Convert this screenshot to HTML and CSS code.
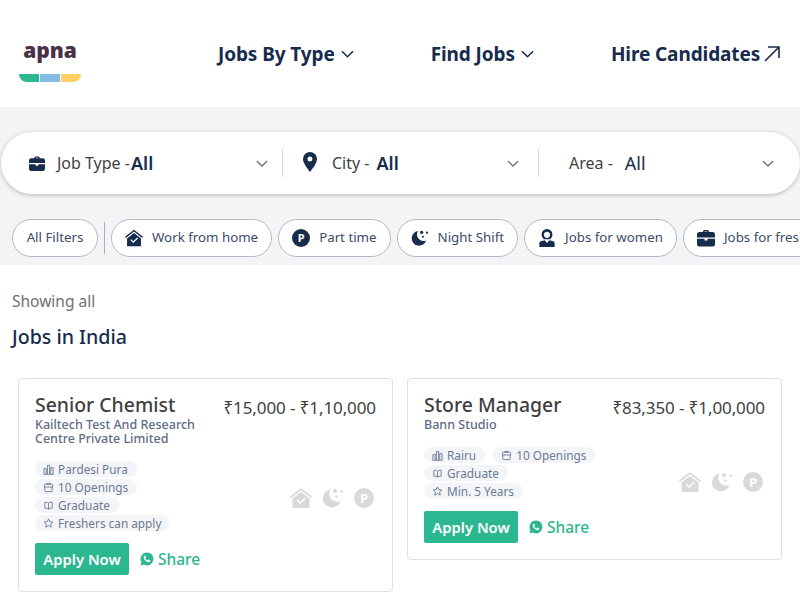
FILE: index.html
```html
<!DOCTYPE html>
<html lang="en">
<head>
  <meta charset="UTF-8" />
  <title>Jobs in India</title>
  <link rel="stylesheet" href="styles.css">
</head>
<body>

<svg class="defs" width="0" height="0" aria-hidden="true">
  <symbol id="i-house" viewBox="0 0 22 20">
    <path d="M11 0 22 8.600l-1 1.300L11 2.200 1 9.900 0 8.600z" fill="currentColor"/>
    <path fill-rule="evenodd" d="M11 4 19.500 10.500V20H2.500V10.500zM7.500 11.500 6.500 12.500 10 16 16 10.500 15 9.500 10 14z" fill="currentColor"/>
  </symbol>
  <symbol id="i-moon" viewBox="0 0 22 20">
    <path d="M8.500 1.500A9 9 0 1 0 18.500 13 8 8 0 0 1 8.500 1.500z" fill="currentColor"/>
    <circle cx="13" cy="3" r="2" fill="currentColor"/>
    <circle cx="19.500" cy="3.500" r="1.300" fill="currentColor"/>
    <circle cx="14.500" cy="8.500" r="1.300" fill="currentColor"/>
  </symbol>
  <symbol id="i-case" viewBox="0 0 18 18">
    <path fill-rule="evenodd" d="M6 3V2.500A1.500 1.500 0 0 1 7.500 1h3A1.500 1.500 0 0 1 12 2.500V3h3.500A2.500 2.500 0 0 1 18 5.500V8.500H0V5.500A2.500 2.500 0 0 1 2.500 3zM7.500 2.500V3h3V2.500z" fill="currentColor"/>
    <path d="M0 9.800H7.500V11.500H10.500V9.800H18V15A2.500 2.500 0 0 1 15.500 17.500H2.500A2.500 2.500 0 0 1 0 15z" fill="currentColor"/>
  </symbol>
  <symbol id="i-woman" viewBox="0 0 18 20">
    <path fill-rule="evenodd" d="M9 0a6 6 0 0 1 6 6c0 2-.8 3.500-2 4.600V11.500H5V10.600C3.800 9.500 3 8 3 6a6 6 0 0 1 6-6zM9 3C7.300 3 5.600 4.300 5.500 6.500 5.500 8.500 7 10 9 10s3.500-1.500 3.500-3.500C12.400 4.300 10.700 3 9 3z" fill="currentColor"/>
    <path d="M2 13.500 6.500 12.500 9 15.500 11.500 12.500 16 13.500A2 2 0 0 1 17.500 15.500V20H.5V15.500A2 2 0 0 1 2 13.500z" fill="currentColor"/>
  </symbol>
  <symbol id="i-chev" viewBox="0 0 14 8">
    <path d="M1 1 7 7 13 1" fill="none" stroke="currentColor" stroke-width="1.600"/>
  </symbol>
  <symbol id="i-wa" viewBox="0 0 16 16">
    <path fill-rule="evenodd" d="M8 .5a7.400 7.400 0 0 1 0 14.800 7.400 7.400 0 0 1-3.500-.9L.6 15.500l1.100-3.800A7.400 7.400 0 0 1 8 .5zM5.700 4.200c-.3 0-.7.100-1 .5-.8 1-.6 2.300.4 3.800 1.200 1.700 2.800 2.900 4.500 3.100 1 .1 2-.6 2.100-1.400.1-.5 0-.7-.2-.8L9.900 8.600c-.3-.1-.5 0-.6.200l-.5.700c-.1.200-.3.200-.5.100-1-.5-1.700-1.200-2.200-2.100-.1-.2 0-.3.100-.5l.4-.5c.1-.1.100-.3.100-.5L6.100 4.500c-.1-.2-.2-.3-.4-.3z" fill="currentColor"/>
  </symbol>
  <symbol id="i-city" viewBox="0 0 12 12">
    <path d="M1 11V5H3.500V11M4.800 11V1.500H7.200V11M8.500 11V4H11V11M.5 11.200H11.500" fill="none" stroke="currentColor"/>
  </symbol>
  <symbol id="i-open" viewBox="0 0 12 12">
    <path d="M1.500 5.500V3.500A1 1 0 0 1 2.500 2.500H9.500A1 1 0 0 1 10.500 3.500V5.500H1.500zM2 5.500V9.500A1 1 0 0 0 3 10.500H9A1 1 0 0 0 10 9.500V5.500M4 2.500V1.500H8V2.500" fill="none" stroke="currentColor"/>
  </symbol>
  <symbol id="i-book" viewBox="0 0 12 12">
    <path d="M6 3.500C5 2.500 3.500 2.300 2 2.500V9C3.500 8.800 5 9 6 10 7 9 8.500 8.800 10 9V2.500C8.500 2.300 7 2.500 6 3.500zM6 3.500V10" fill="none" stroke="currentColor"/>
  </symbol>
  <symbol id="i-star" viewBox="0 0 12 12">
    <path d="M6 1 7.400 4 10.800 4.400 8.300 6.700 9 10 6 8.300 3 10 3.700 6.700 1.200 4.400 4.600 4z" fill="none" stroke="currentColor"/>
  </symbol>
</svg>

<header class="topbar">
  <div class="logo">
    <span class="logo-text">apna</span>
    <div class="logo-bar"><i class="green"></i><i class="blue"></i><i class="yellow"></i></div>
  </div>
  <nav class="nav">
    <a class="nav-item">Jobs By Type <svg class="nav-chev"><use href="#i-chev"/></svg></a>
    <a class="nav-item">Find Jobs <svg class="nav-chev"><use href="#i-chev"/></svg></a>
    <a class="nav-item">Hire Candidates
      <svg class="nav-arrow" viewBox="0 0 16 16"><path d="M1 15 15 1M4 1H15V12" fill="none" stroke="currentColor" stroke-width="1.600"/></svg>
    </a>
  </nav>
</header>

<section class="band">
  <div class="search">
    <div class="seg seg-type">
      <svg class="seg-icon"><use href="#i-case"/></svg>
      <span class="seg-label">Job Type -</span><b class="seg-value">All</b>
      <svg class="seg-chev"><use href="#i-chev"/></svg>
    </div>
    <div class="seg seg-city">
      <svg class="seg-pin" viewBox="0 0 14 20"><path fill-rule="evenodd" d="M7 0a7 7 0 0 1 7 7c0 4-4 9-7 13C4 16 0 11 0 7a7 7 0 0 1 7-7zM7 4.500a2.500 2.500 0 1 0 0 5 2.500 2.500 0 0 0 0-5z" fill="currentColor"/></svg>
      <span class="seg-label">City -</span><b class="seg-value">All</b>
      <svg class="seg-chev"><use href="#i-chev"/></svg>
    </div>
    <div class="seg seg-area">
      <span class="seg-label">Area -</span><span class="seg-value plain">All</span>
      <svg class="seg-chev"><use href="#i-chev"/></svg>
    </div>
  </div>

  <div class="chips">
    <button class="chip chip-plain">All Filters</button>
    <span class="chip-sep"></span>
    <button class="chip"><svg class="chip-icon"><use href="#i-house"/></svg>Work from home</button>
    <button class="chip"><span class="p-icon">P</span>Part time</button>
    <button class="chip"><svg class="chip-icon"><use href="#i-moon"/></svg>Night Shift</button>
    <button class="chip"><svg class="chip-icon"><use href="#i-woman"/></svg>Jobs for women</button>
    <button class="chip"><svg class="chip-icon"><use href="#i-case"/></svg>Jobs for freshers</button>
  </div>
</section>

<main class="results">
  <p class="showing">Showing all</p>
  <h1 class="heading">Jobs in India</h1>

  <div class="cards">
    <article class="card">
      <div class="card-left">
        <h2 class="job-title">Senior Chemist</h2>
        <p class="company">Kailtech Test And Research Centre Private Limited</p>
        <ul class="tags">
          <li class="tag"><svg><use href="#i-city"/></svg>Pardesi Pura</li>
          <li class="tag"><svg><use href="#i-open"/></svg>10 Openings</li>
          <li class="tag"><svg><use href="#i-book"/></svg>Graduate</li>
          <li class="tag"><svg><use href="#i-star"/></svg>Freshers can apply</li>
        </ul>
        <div class="actions">
          <button class="apply">Apply Now</button>
          <a class="share"><svg><use href="#i-wa"/></svg>Share</a>
        </div>
      </div>
      <div class="card-right">
        <div class="salary">₹15,000 - ₹1,10,000</div>
        <div class="perks">
          <svg><use href="#i-house"/></svg>
          <svg><use href="#i-moon"/></svg>
          <span class="p-icon">P</span>
        </div>
      </div>
    </article>

    <article class="card">
      <div class="card-left">
        <h2 class="job-title">Store Manager</h2>
        <p class="company">Bann Studio</p>
        <ul class="tags">
          <li class="tag"><svg><use href="#i-city"/></svg>Rairu</li>
          <li class="tag"><svg><use href="#i-open"/></svg>10 Openings</li>
          <li class="tag"><svg><use href="#i-book"/></svg>Graduate</li>
          <li class="tag"><svg><use href="#i-star"/></svg>Min. 5 Years</li>
        </ul>
        <div class="actions">
          <button class="apply">Apply Now</button>
          <a class="share"><svg><use href="#i-wa"/></svg>Share</a>
        </div>
      </div>
      <div class="card-right">
        <div class="salary">₹83,350 - ₹1,00,000</div>
        <div class="perks">
          <svg><use href="#i-house"/></svg>
          <svg><use href="#i-moon"/></svg>
          <span class="p-icon">P</span>
        </div>
      </div>
    </article>
  </div>
</main>

</body>
</html>
```

FILE: styles.css
```css
* {
  box-sizing: border-box;
}
html, body {
  height: 600px;
  overflow: hidden;
}
body {
  margin: 0;
  background: #fff;
  font-family: "Noto Sans", Arial, sans-serif;
  color: #172b4d;
}
.defs {
  position: absolute;
}

/* header */
.topbar {
  height: 107px;
  display: flex;
  align-items: center;
  padding-left: 19px;
}
.logo {
  width: 62px;
  margin-right: 137px;
  display: flex;
  flex-direction: column;
  align-items: center;
  margin-top: 14px;
}
.logo-text {
  font-size: 21px;
  font-weight: 900;
  line-height: 22px;
  color: #4a3049;
  margin-bottom: 13px;
}
.logo-bar {
  width: 62px;
  height: 8px;
  display: flex;
  gap: 1px;
  border-radius: 0 0 11px 11px;
  overflow: hidden;
}
.logo-bar i {
  flex: 1;
}
.logo-bar .green { background: #2bb792; }
.logo-bar .blue { background: #85bce4; }
.logo-bar .yellow { background: #ffcf5f; }
.nav {
  display: flex;
  gap: 77px;
}
.nav-item {
  display: flex;
  align-items: center;
  gap: 6px;
  font-size: 19px;
  font-weight: 700;
  letter-spacing: -0.1px;
  white-space: nowrap;
}
.nav-chev {
  width: 13px;
  height: 8px;
}
.nav-arrow {
  width: 16px;
  height: 16px;
  margin-left: -2px;
}

/* search + filter band */
.band {
  background: #f3f4f6;
  padding: 25px 0 8px;
}
.search {
  height: 62px;
  margin-left: 1px;
  display: grid;
  grid-template-columns: 282px 256px 1fr;
  background: #fff;
  border-radius: 31px;
  box-shadow: 0 1px 4px rgba(0, 0, 0, 0.25);
}
.seg {
  position: relative;
  display: flex;
  align-items: center;
  font-size: 16px;
  color: #3f3f3f;
}
.seg-type {
  padding-left: 28px;
}
.seg-city {
  padding-left: 20px;
}
.seg-area {
  padding-left: 30px;
}
.seg-city::after, .seg-type::after {
  content: "";
  position: absolute;
  right: 0;
  top: 17px;
  height: 28px;
  width: 1px;
  background: #d6d8dc;
}
.seg-icon {
  width: 16px;
  height: 17px;
  color: #172b4d;
  margin-right: 12px;
}
.seg-pin {
  width: 14px;
  height: 20px;
  color: #172b4d;
  margin-right: 15px;
  margin-top: -3px;
}
.seg-label {
  white-space: nowrap;
}
.seg-value {
  color: #172b4d;
  font-size: 18px;
  font-weight: 600;
  margin-left: 1px;
}
.seg-city .seg-value {
  margin-left: 7px;
}
.seg-value.plain {
  font-weight: 400;
  margin-left: 12px;
}
.seg-chev {
  width: 12px;
  height: 7px;
  color: #72777f;
  margin-left: auto;
  margin-right: 15px;
}
.seg-city .seg-chev {
  margin-right: 20px;
}
.seg-area .seg-chev {
  margin-right: 26px;
}

.chips {
  display: flex;
  align-items: center;
  gap: 6px;
  margin-top: 25px;
  padding-left: 12px;
  overflow: hidden;
}
.chip {
  flex: none;
  height: 38px;
  display: flex;
  align-items: center;
  padding: 0 13px 2px;
  background: #fff;
  border: 1px solid #b4bac8;
  border-radius: 19px;
  font-family: inherit;
  font-size: 13.3px;
  color: #3c4a6b;
}
.chip-plain {
  width: 86px;
  padding: 0 0 2px;
  justify-content: center;
}
.chip-sep {
  flex: none;
  width: 1px;
  height: 32px;
  background: #a9b0c0;
}
.chip-icon {
  width: 18px;
  height: 18px;
  color: #172b4d;
  margin: 2px 9px 0 0;
}
.p-icon {
  flex: none;
  width: 18px;
  height: 18px;
  border-radius: 50%;
  background: #172b4d;
  color: #fff;
  font-size: 11px;
  font-weight: 700;
  line-height: 18px;
  text-align: center;
}
.chip .p-icon {
  margin: 2px 9px 0 0;
}

/* results */
.results {
  padding-top: 24px;
}
.showing {
  margin: 0 12px;
  font-size: 15.5px;
  line-height: 24px;
  color: #707070;
}
.heading {
  margin: 12px 12px 0;
  font-size: 19.6px;
  font-weight: 500;
  line-height: 24px;
}
.cards {
  display: grid;
  grid-template-columns: 375px 375px;
  gap: 14px;
  align-items: start;
  margin: 29px 0 0 18px;
}
.card {
  display: flex;
  justify-content: space-between;
  padding: 16px;
  border: 1px solid #dcdfe6;
  border-radius: 4px;
}
.card-left {
  width: 176px;
}
.job-title {
  margin: 0;
  font-size: 19.4px;
  font-weight: 500;
  line-height: 20px;
  color: #3f3f3f;
  white-space: nowrap;
}
.company {
  margin: 3px 0 15px;
  font-size: 12.5px;
  font-weight: 500;
  line-height: 14px;
  color: #5e6c84;
}
.tags {
  list-style: none;
  display: flex;
  flex-wrap: wrap;
  gap: 2px 8px;
  margin: 0;
  padding: 0;
}
.tag {
  height: 16px;
  display: flex;
  align-items: center;
  gap: 4px;
  padding: 0 9px 0 8px;
  background: #f4f5f9;
  border-radius: 8px;
  font-size: 11.8px;
  color: #6b7a90;
  white-space: nowrap;
}
.tag svg {
  width: 11px;
  height: 11px;
}
.actions {
  display: flex;
  align-items: center;
  gap: 11px;
  margin-top: 12px;
}
.apply {
  width: 94px;
  height: 32px;
  padding: 0;
  border: 0;
  border-radius: 2px;
  background: #2bb78f;
  color: #fff;
  font-family: inherit;
  font-size: 14.8px;
  font-weight: 600;
  white-space: nowrap;
}
.share {
  display: flex;
  align-items: center;
  gap: 4px;
  font-size: 15.5px;
  font-weight: 500;
  color: #2bb78f;
}
.share svg {
  width: 14px;
  height: 14px;
}
.card-right {
  display: flex;
  flex-direction: column;
  align-items: flex-end;
}
.salary {
  height: 26px;
  font-size: 17px;
  line-height: 26px;
  letter-spacing: -0.1px;
  color: #3f3f3f;
  white-space: nowrap;
}
.perks {
  display: flex;
  align-items: center;
  gap: 10px;
  margin: auto 2px auto 0;
  color: #d9d9d9;
}
.perks svg {
  width: 22px;
  height: 20px;
}
.perks .p-icon {
  width: 20px;
  height: 20px;
  background: #d9d9d9;
  line-height: 20px;
  font-size: 13px;
}
```
